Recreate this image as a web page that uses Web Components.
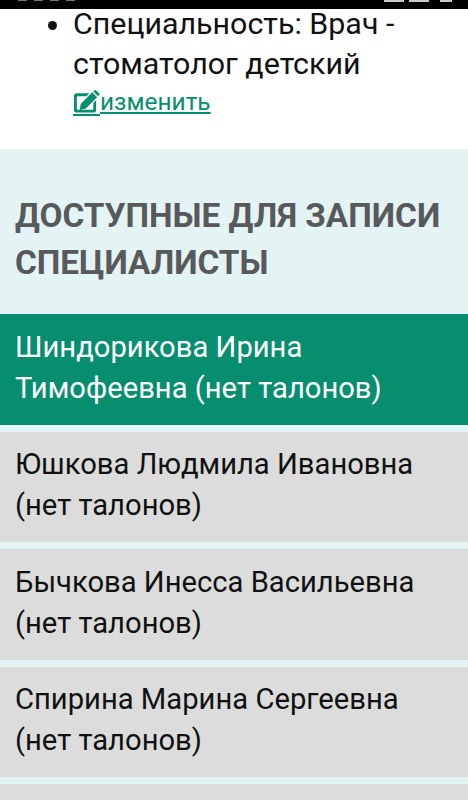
<!DOCTYPE html>
<html>
<head>
<meta charset="utf-8">
<style>
  html, body { margin: 0; padding: 0; background: #fff; }
  body { width: 468px; height: 800px; overflow: hidden; font-family: Roboto, "Noto Sans", sans-serif; }
</style>
</head>
<body>
<status-strip></status-strip>
<doctor-summary>Специальность: Врач - стоматолог детский</doctor-summary>
<specialist-panel heading="Доступные для записи специалисты">
  <specialist-item active>Шиндорикова Ирина Тимофеевна (нет талонов)</specialist-item>
  <specialist-item>Юшкова Людмила Ивановна (нет талонов)</specialist-item>
  <specialist-item>Бычкова Инесса Васильевна (нет талонов)</specialist-item>
  <specialist-item>Спирина Марина Сергеевна (нет талонов)</specialist-item>
  <specialist-item></specialist-item>
</specialist-panel>
<script>
class StatusStrip extends HTMLElement {
  constructor() {
    super();
    // only the lower edge of the clock and the status icons shows in the crop
    this.attachShadow({mode: 'open'}).innerHTML = `
      <style>
        :host { display: flex; height: 9px; background: #000; overflow: hidden; padding: 0 16px 0 18px; align-items: flex-start; }
        i { display: block; height: 1.500px; background: #c8c8c8; }
        .left { display: flex; gap: 7px; }
        .left i { width: 9px; height: 1px; background: #777; }
        .right { display: flex; gap: 5px; margin-left: auto; }
        .right i:nth-child(1) { width: 20px; }
        .right i:nth-child(2) { width: 20px; }
        .right i:nth-child(3) { width: 12px; margin-left: 6px; }
      </style>
      <div class="left"><i></i><i></i><i></i><i></i></div>
      <div class="right"><i></i><i></i><i></i></div>`;
  }
}

class DoctorSummary extends HTMLElement {
  constructor() {
    super();
    this.attachShadow({mode: 'open'}).innerHTML = `
      <style>
        :host { display: flow-root; height: 140px; color: #111; }
        ul { margin: -5px 0 0; padding: 0 0 0 73px; font-size: 30.400px; line-height: 40px; }
        li { padding-right: 40px; }
        a { display: flex; align-items: flex-end; width: max-content; margin-top: 1px; font-size: 24.400px; line-height: 34px; color: #068e6f; text-decoration: underline; text-underline-offset: 2px; }
        svg { width: 27px; height: 25px; display: block; flex: none; margin-bottom: 3px; border-bottom: 2px solid #068e6f; }
      </style>
      <ul><li><slot></slot>
      <a href="#"><svg viewBox="0 0 28 25"><path fill="#068e6f" d="M4 4h13l-3 3H5a1 1 0 0 0-1 1v12a1 1 0 0 0 1 1h15a1 1 0 0 0 1-1v-6l3-3v10a3 3 0 0 1-3 3H4a3 3 0 0 1-3-3V7a3 3 0 0 1 3-3zM20 3l5 5-12 12-6 1 1-6zM22 1a1.500 1.500 0 0 1 2 0l3 3a1.500 1.500 0 0 1 0 2l-1 1-5-5z"/></svg>изменить</a></li></ul>`;
  }
}

class SpecialistPanel extends HTMLElement {
  constructor() {
    super();
    this.attachShadow({mode: 'open'}).innerHTML = `
      <style>
        :host { display: block; background: #e4f3f3; }
        h2 { margin: 0; padding: 44px 15px 28px; font-size: 33.350px; line-height: 46.500px; font-weight: 700; text-transform: uppercase; color: #58595b; }
        .list { display: flex; flex-direction: column; gap: 7px; }
      </style>
      <h2></h2>
      <div class="list"><slot></slot></div>`;
    this.shadowRoot.querySelector('h2').textContent = this.getAttribute('heading');
  }
}

class SpecialistItem extends HTMLElement {
  constructor() {
    super();
    this.attachShadow({mode: 'open'}).innerHTML = `
      <style>
        :host { display: block; box-sizing: border-box; height: 110.500px; padding: 12.500px 15px; font-size: 29.200px; line-height: 41px; background: #dcdcdc; color: #111; }
        :host([active]) { background: #068e6f; color: #fff; }
      </style>
      <slot></slot>`;
  }
}

customElements.define('status-strip', StatusStrip);
customElements.define('doctor-summary', DoctorSummary);
customElements.define('specialist-panel', SpecialistPanel);
customElements.define('specialist-item', SpecialistItem);
</script>
</body>
</html>
